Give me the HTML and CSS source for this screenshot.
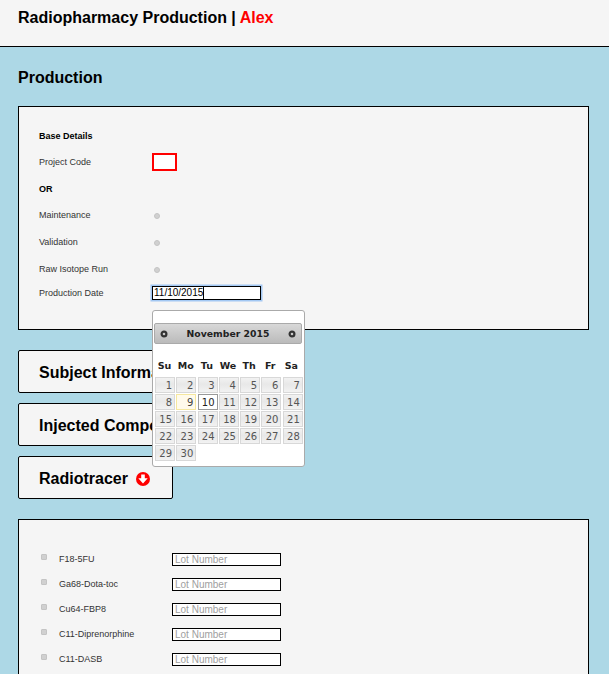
FILE: index.html
```html
<!DOCTYPE html>
<html lang="en">
<head>
    <meta charset="UTF-8">
    <meta name="viewport" content="width=device-width, initial-scale=1.0">
    <title>Radiopharmacy Production</title>
    <link rel="stylesheet" href="styles.css">
</head>
<body>
    <div class="top-bar">
        <h1>Radiopharmacy Production | <span class="user">Alex</span></h1>
    </div>

    <div class="content">
        <h2>Production</h2>

        <div class="panel base-panel">
            <div class="row row-heading"><strong>Base Details</strong></div>
            <div class="row row-code">
                <label>Project Code</label>
                <input type="text" class="code-input">
            </div>
            <div class="row row-or"><strong>OR</strong></div>
            <div class="row row-radio">
                <label>Maintenance</label>
                <input type="radio" name="runType">
            </div>
            <div class="row row-radio">
                <label>Validation</label>
                <input type="radio" name="runType">
            </div>
            <div class="row row-radio">
                <label>Raw Isotope Run</label>
                <input type="radio" name="runType">
            </div>
            <div class="row row-date">
                <label>Production Date</label>
                <div class="date-input"><span class="date-value">11/10/2015</span></div>
            </div>
        </div>

        <div class="section-btn wide">Subject Information
            <svg class="arrow" viewBox="0 0 14 14"><use href="#arrowDown"></use></svg>
        </div>
        <div class="section-btn wide">Injected Compound
            <svg class="arrow" viewBox="0 0 14 14"><use href="#arrowDown"></use></svg>
        </div>
        <div class="section-btn">Radiotracer
            <svg class="arrow" viewBox="0 0 14 14"><use href="#arrowDown"></use></svg>
        </div>

        <div class="panel tracer-panel">
            <div class="tracer-row">
                <input type="checkbox"><label>F18-5FU</label>
                <input type="text" class="lot-input" placeholder="Lot Number">
            </div>
            <div class="tracer-row">
                <input type="checkbox"><label>Ga68-Dota-toc</label>
                <input type="text" class="lot-input" placeholder="Lot Number">
            </div>
            <div class="tracer-row">
                <input type="checkbox"><label>Cu64-FBP8</label>
                <input type="text" class="lot-input" placeholder="Lot Number">
            </div>
            <div class="tracer-row">
                <input type="checkbox"><label>C11-Diprenorphine</label>
                <input type="text" class="lot-input" placeholder="Lot Number">
            </div>
            <div class="tracer-row">
                <input type="checkbox"><label>C11-DASB</label>
                <input type="text" class="lot-input" placeholder="Lot Number">
            </div>
        </div>
    </div>

    <div class="datepicker">
        <div class="dp-header">
            <svg class="dp-nav" viewBox="0 0 8 8"><circle cx="4" cy="4" r="2.4" fill="none" stroke="#333" stroke-width="2.2"></circle></svg>
            <span class="dp-title">November 2015</span>
            <svg class="dp-nav" viewBox="0 0 8 8"><circle cx="4" cy="4" r="2.4" fill="none" stroke="#333" stroke-width="2.2"></circle></svg>
        </div>
        <div class="dp-names">
            <span>Su</span><span>Mo</span><span>Tu</span><span>We</span><span>Th</span><span>Fr</span><span>Sa</span>
        </div>
        <div class="dp-days">
            <a>1</a><a>2</a><a>3</a><a>4</a><a>5</a><a>6</a><a>7</a>
            <a>8</a><a class="highlight">9</a><a class="active">10</a><a>11</a><a>12</a><a>13</a><a>14</a>
            <a>15</a><a>16</a><a>17</a><a>18</a><a>19</a><a>20</a><a>21</a>
            <a>22</a><a>23</a><a>24</a><a>25</a><a>26</a><a>27</a><a>28</a>
            <a>29</a><a>30</a>
        </div>
    </div>

    <svg class="icon-defs" width="0" height="0">
        <symbol id="arrowDown" viewBox="0 0 14 14">
            <circle cx="7" cy="7" r="7" fill="#f00"></circle>
            <path d="M5.2 2.6h3.6v3.6h2.9L7 11.4 2.3 6.2h2.9z" fill="#fff"></path>
        </symbol>
    </svg>
</body>
</html>
```

FILE: styles.css
```css
html, body {
    height: 674px;
    overflow: hidden;
}

body {
    margin: 0;
    padding: 0;
    font-family: "Liberation Sans", Arial, sans-serif;
    background-color: #add8e6;
    color: #000;
    position: relative;
}

.top-bar {
    height: 46px;
    background-color: #f5f5f5;
    border-bottom: 1px solid #000;
    padding-left: 18px;
}

h1 {
    margin: 0;
    padding-top: 7px;
    font-size: 16px;
    line-height: 21px;
    font-weight: bold;
}

.user {
    color: #f00;
}

.content {
    padding: 0 20px 0 18px;
}

h2 {
    margin: 0;
    padding-top: 22px;
    font-size: 16px;
    line-height: 18px;
    height: 37px;
    font-weight: bold;
}

.panel {
    background-color: #f5f5f5;
    border: 1px solid #000;
    padding-left: 20px;
    font-size: 9px;
    color: #333;
}

.base-panel {
    padding-top: 18px;
    height: 204px;
}

.row {
    display: flex;
    align-items: center;
}

.row label {
    width: 113px;
}

.row strong {
    color: #000;
}

.row-heading {
    height: 21px;
}

.row-code {
    height: 31px;
}

.row-or {
    height: 23px;
    margin-bottom: 1px;
}

.row-radio {
    height: 27px;
}

.row-date {
    height: 22px;
}

.row input[type="radio"] {
    width: 6px;
    height: 6px;
    margin: 3px 0 0 2px;
    appearance: none;
    border-radius: 50%;
    background-color: #d0d0d0;
    border: 1px solid #c4c4c4;
    box-sizing: border-box;
}

.code-input {
    width: 25px;
    height: 18px;
    box-sizing: border-box;
    border: 2px solid #f00;
    border-radius: 0;
    background-color: #fff;
    padding: 0;
    margin: 0;
}

.date-input {
    width: 106px;
    height: 12px;
    border: 1px solid #000;
    background-color: #fff;
    box-shadow: 0 0 0 1.5px #a3c8f3;
    font-size: 10px;
    line-height: 12px;
    color: #000;
    padding-left: 1px;
}

.date-value {
    border-right: 1px solid #000;
    display: inline-block;
    height: 12px;
}

.section-btn {
    width: 120px;
    height: 39px;
    margin-top: 10px;
    padding: 2px 13px 0 20px;
    background-color: #f5f5f5;
    border: 1px solid #000;
    border-radius: 2px;
    font-size: 16px;
    font-weight: bold;
    white-space: nowrap;
    display: flex;
    align-items: center;
    gap: 8px;
}

.section-btn.wide {
    width: 210px;
}

.base-panel + .section-btn {
    margin-top: 20px;
}

.arrow {
    width: 14px;
    height: 14px;
    flex: none;
}

.tracer-panel {
    margin-top: 20px;
    height: 200px;
    padding-top: 26px;
}

.tracer-row {
    height: 25px;
    display: flex;
    align-items: center;
}

.tracer-row label {
    width: 113px;
}

.tracer-row input[type="checkbox"] {
    width: 6px;
    height: 6px;
    margin: 0 12px 3px 2px;
    appearance: none;
    background-color: #d0d0d0;
    border: 1px solid #c4c4c4;
    border-radius: 1px;
    box-sizing: border-box;
}

.lot-input {
    width: 109px;
    height: 13px;
    box-sizing: border-box;
    border: 1px solid #000;
    border-radius: 0;
    background-color: #fff;
    padding: 0 2px;
    margin: 1px 0 0 0;
    font-family: "Liberation Sans", Arial, sans-serif;
    font-size: 10px;
}

.lot-input::placeholder {
    color: #a0a0a0;
}

/* calendar popup, sits over the form */
.datepicker {
    position: absolute;
    left: 152px;
    top: 310px;
    width: 151px;
    height: 143px;
    background-color: #fff;
    border: 1px solid #aaa;
    border-radius: 3px;
    padding-top: 12px;
    font-family: "DejaVu Sans", Verdana, sans-serif;
    color: #333;
}

.dp-header {
    margin: 0 2px 0 1px;
    height: 19px;
    border: 1px solid #aaa;
    border-radius: 2px;
    background: linear-gradient(#d8d8d8, #bbb);
    display: flex;
    align-items: center;
    justify-content: space-between;
    padding: 0 5px;
    color: #222;
    font-size: 9.3px;
    font-weight: bold;
}

.dp-nav {
    width: 8px;
    height: 8px;
}

.dp-names {
    display: grid;
    grid-template-columns: repeat(7, 1fr);
    margin: 15px 2px 4px 1px;
    height: 14px;
    font-size: 9.5px;
    line-height: 14px;
    font-weight: bold;
    text-align: center;
    color: #222;
}

.dp-days {
    display: grid;
    grid-template-columns: repeat(7, 20px);
    grid-auto-rows: 16px;
    gap: 1px 1.3px;
    margin-left: 2px;
    font-size: 10px;
}

.dp-days a {
    border: 1px solid #d8d8d8;
    background: linear-gradient(#f2f2f2, #e8e8e8 45%, #f2f2f2);
    text-align: right;
    padding-right: 2px;
    line-height: 16px;
    color: #555;
}

.dp-days a.highlight {
    background: #fffaeb;
    border-color: #f5e79e;
    color: #444;
}

.dp-days a.active {
    background: #fff;
    border-color: #999;
    color: #212121;
}

.icon-defs {
    position: absolute;
}
```
